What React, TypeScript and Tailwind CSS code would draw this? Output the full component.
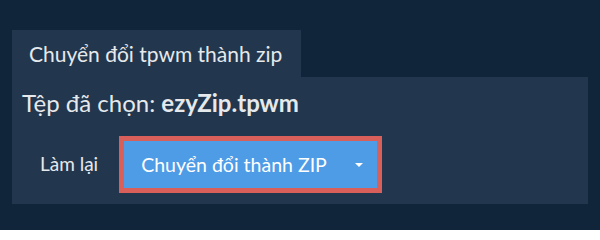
import React from 'react';

export default function App() {
    return (
        <div
            className="w-[600px] h-[230px] bg-[#10243a] px-3 pt-[30px] text-[#e6e9ec]"
            style={{ fontFamily: 'Lato, "Noto Sans", sans-serif' }}
        >
            {/* Tab */}
            <div className="flex">
                <div className="h-[47px] w-[289px] bg-[#22374d] flex items-center pl-[17px] text-[21px]">
                    Chuyển đổi tpwm thành zip
                </div>
            </div>

            {/* Panel */}
            <div className="h-[127px] bg-[#22374d] pl-[10px] pt-[11px]">
                <div className="text-[24px] leading-[30px]">
                    Tệp đã chọn: <span className="font-bold">ezyZip.tpwm</span>
                </div>

                <div className="flex items-center mt-[18px]">
                    <button className="ml-[18px] mr-[21px] text-[19px]">Làm lại</button>
                    <div className="border-[5px] border-[#d9605a]">
                        <button className="w-[253px] h-[47px] bg-[#4e9be6] flex items-center pl-[17px] pr-[14px] text-[19.5px] text-white">
                            <span className="flex-1 text-left">Chuyển đổi thành ZIP</span>
                            <svg width="8" height="4" viewBox="0 0 8 4" className="ml-2">
                                <path d="M0 0h8L4 4z" fill="#ffffff" />
                            </svg>
                        </button>
                    </div>
                </div>
            </div>
        </div>
    );
}
